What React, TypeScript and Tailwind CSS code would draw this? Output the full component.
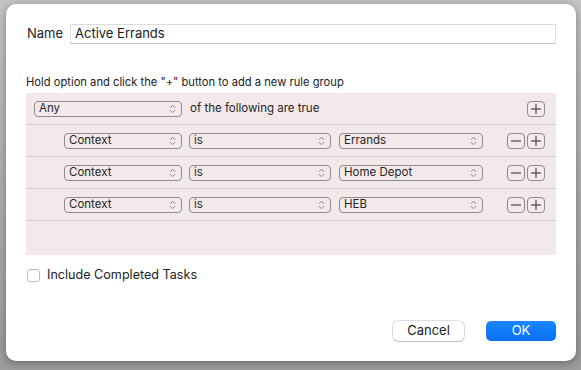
const font = { fontFamily: "Inter, 'Liberation Sans', sans-serif" };

function Chevrons() {
  return (
    <svg width="7" height="10" viewBox="0 0 7 10" className="shrink-0">
      <path d="M1 3.8 L3.5 1.3 L6 3.8" fill="none" stroke="#8a8a8a" strokeWidth="1" />
      <path d="M1 6.2 L3.5 8.7 L6 6.2" fill="none" stroke="#8a8a8a" strokeWidth="1" />
    </svg>
  );
}

function Select({ value, w }: { value: string; w: string }) {
  return (
    <div
      className={`flex h-[16px] items-center justify-between rounded-[4px] border border-[#8f8a8a] pl-[4px] pr-[5px] text-[11.5px] leading-none text-[#262626] ${w}`}
    >
      <span>{value}</span>
      <Chevrons />
    </div>
  );
}

function SmallButton({ kind }: { kind: "plus" | "minus" }) {
  return (
    <div className="flex h-[16px] w-[18px] items-center justify-center rounded-[4px] border border-[#8f8a8a]">
      <svg width="12" height="12" viewBox="0 0 12 12">
        <path d="M1 6 H11" stroke="#2a2a2a" strokeWidth="1" />
        {kind === "plus" && <path d="M6 1 V11" stroke="#2a2a2a" strokeWidth="1" />}
      </svg>
    </div>
  );
}

function RuleRow({ value }: { value: string }) {
  return (
    <div className="flex h-[32px] items-center border-b border-[#d5cccd] pl-[38px] pr-[11px]">
      <Select value="Context" w="w-[118px]" />
      <div className="ml-[7px]">
        <Select value="is" w="w-[142px]" />
      </div>
      <div className="ml-[8px]">
        <Select value={value} w="w-[144px]" />
      </div>
      <div className="ml-auto flex gap-[2px]">
        <SmallButton kind="minus" />
        <SmallButton kind="plus" />
      </div>
    </div>
  );
}

export default function App() {
  return (
    <div className="h-[370px] w-[581px] bg-gradient-to-b from-[#c4c4c4] to-[#9c9c9c] pl-[6px] pt-[4px]" style={font}>
      <div className="flex h-[357px] w-[570px] flex-col rounded-[10px] bg-white px-[20px] pt-[20px] pb-[20px] shadow-[0_2px_8px_rgba(0,0,0,0.35)]">
        <div className="flex h-[20px] items-center">
          <span className="w-[44px] pl-[1px] text-[13px] text-[#222]">Name</span>
          <div className="flex h-[20px] flex-1 items-center border border-[#dcdcdc] border-b-[#c4c4c4] pl-[4px] text-[13px] text-[#1a1a1a]">
            Active Errands
          </div>
        </div>

        <div className="mt-[31px] h-[18px] text-[11.2px] leading-[14px] text-[#222]">
          Hold option and click the "+" button to add a new rule group
        </div>

        <div className="flex h-[162px] flex-col bg-[#f3e9ea]">
          <div className="flex h-[32px] items-center border-b border-[#d5cccd] pl-[8px] pr-[11px]">
            <Select value="Any" w="w-[148px]" />
            <span className="ml-[8px] text-[11.5px] text-[#262626]">of the following are true</span>
            <div className="ml-auto">
              <SmallButton kind="plus" />
            </div>
          </div>
          <RuleRow value="Errands" />
          <RuleRow value="Home Depot" />
          <RuleRow value="HEB" />
        </div>

        <div className="mt-[11px] flex items-center">
          <div className="ml-[1px] h-[13px] w-[13px] rounded-[3px] border border-[#bdbdbd] bg-white" />
          <span className="ml-[7px] text-[12.6px] text-[#222]">Include Completed Tasks</span>
        </div>

        <div className="mt-auto flex justify-end">
          <div className="flex h-[20px] w-[71px] items-center justify-center rounded-[5px] bg-white text-[13px] text-[#222] shadow-[0_0_0_0.5px_rgba(0,0,0,0.25),0_1px_1px_rgba(0,0,0,0.15)]">
            Cancel
          </div>
          <div className="ml-[22px] flex h-[20px] w-[70px] items-center justify-center rounded-[5px] bg-gradient-to-b from-[#1a86ff] to-[#0a6ff5] text-[13px] text-white">
            OK
          </div>
        </div>
      </div>
    </div>
  );
}
